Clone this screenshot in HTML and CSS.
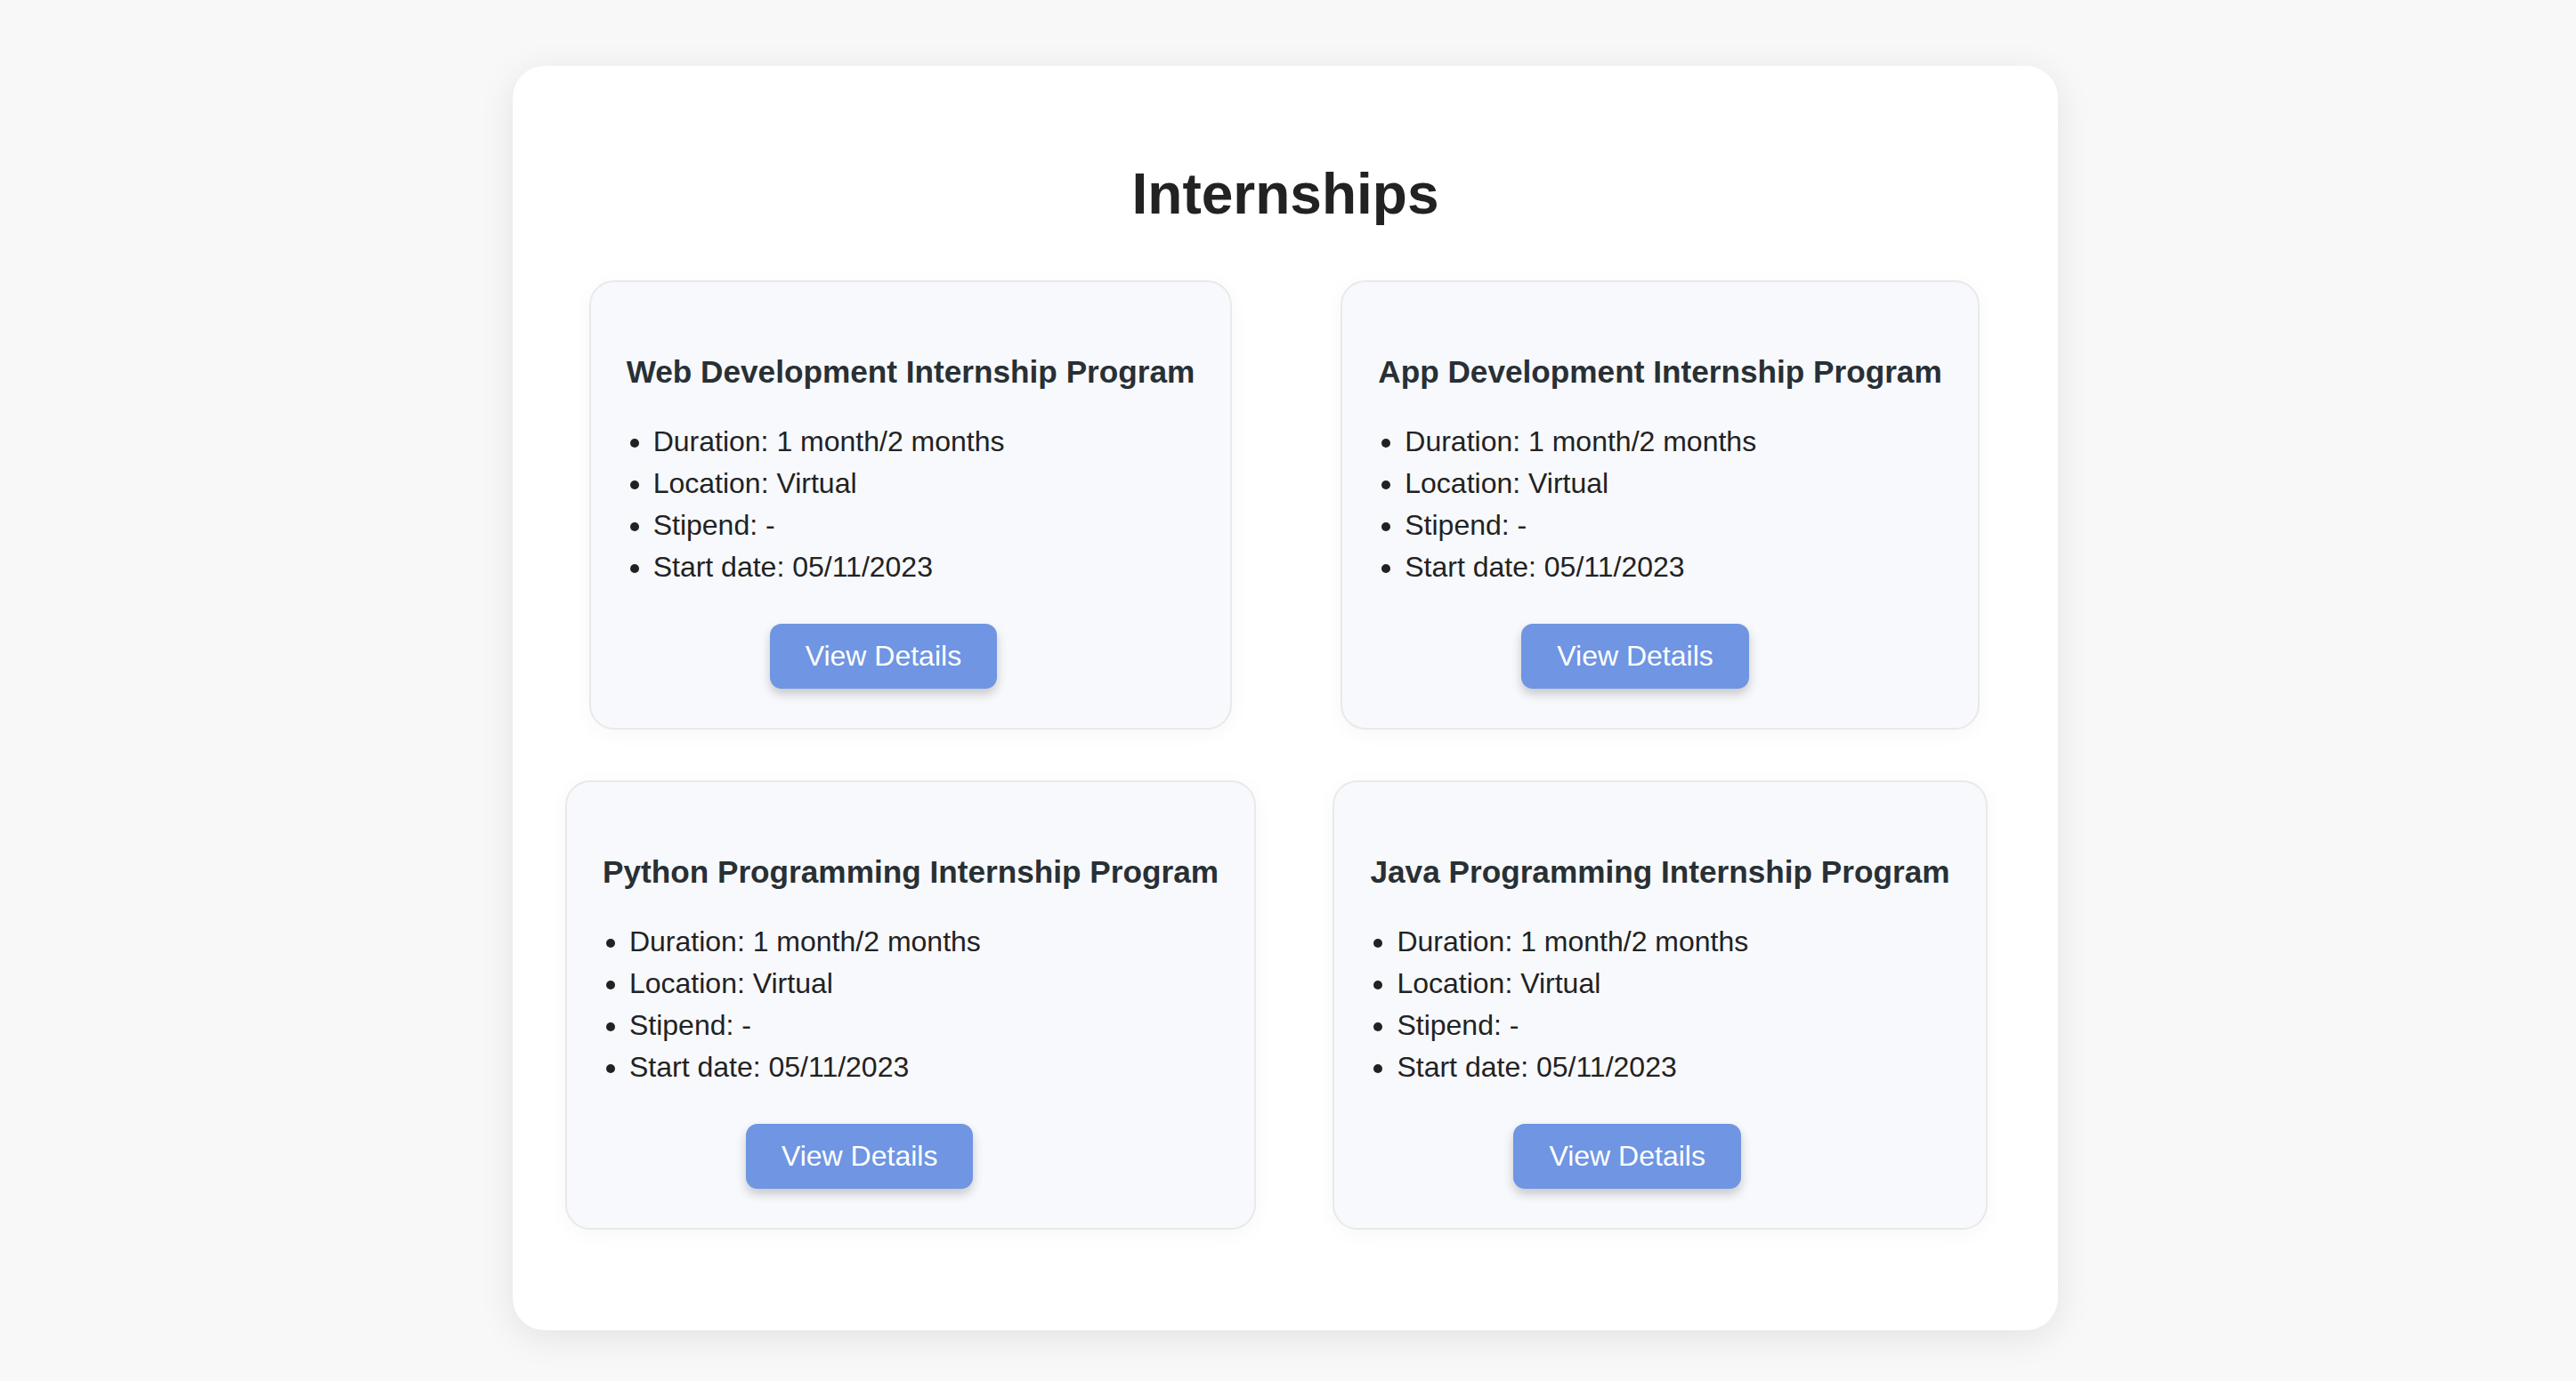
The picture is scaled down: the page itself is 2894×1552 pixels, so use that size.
FILE: index.html
```html
<!DOCTYPE html>
<html lang="en">
<head>
<meta charset="utf-8">
<title>Internships</title>
<link rel="stylesheet" href="styles.css">
</head>
<body>
<main class="panel">
  <h1 class="panel-title">Internships</h1>
  <div class="grid">
    <section class="card">
      <h3 class="card-title">Web Development Internship Program</h3>
      <ul class="card-list">
        <li>Duration: 1 month/2 months</li>
        <li>Location: Virtual</li>
        <li>Stipend: -</li>
        <li>Start date: 05/11/2023</li>
      </ul>
      <button class="btn" type="button">View Details</button>
    </section>
    <section class="card">
      <h3 class="card-title">App Development Internship Program</h3>
      <ul class="card-list">
        <li>Duration: 1 month/2 months</li>
        <li>Location: Virtual</li>
        <li>Stipend: -</li>
        <li>Start date: 05/11/2023</li>
      </ul>
      <button class="btn" type="button">View Details</button>
    </section>
    <section class="card">
      <h3 class="card-title">Python Programming Internship Program</h3>
      <ul class="card-list">
        <li>Duration: 1 month/2 months</li>
        <li>Location: Virtual</li>
        <li>Stipend: -</li>
        <li>Start date: 05/11/2023</li>
      </ul>
      <button class="btn" type="button">View Details</button>
    </section>
    <section class="card">
      <h3 class="card-title">Java Programming Internship Program</h3>
      <ul class="card-list">
        <li>Duration: 1 month/2 months</li>
        <li>Location: Virtual</li>
        <li>Stipend: -</li>
        <li>Start date: 05/11/2023</li>
      </ul>
      <button class="btn" type="button">View Details</button>
    </section>
  </div>
</main>
</body>
</html>
```

FILE: styles.css
```css
* {
  box-sizing: border-box;
}

html, body {
  margin: 0;
  padding: 0;
}

body {
  background: #f8f8f8;
  font-family: "Liberation Sans", Arial, Helvetica, sans-serif;
  color: #222;
  padding: 74px 6px 57px 0;
}

.panel {
  width: 1736px;
  margin: 0 auto;
  background: #ffffff;
  border-radius: 36px;
  box-shadow: 0 8px 40px rgba(0, 0, 0, 0.09);
  padding: 107px 26px 113px;
}

.panel-title {
  margin: 0 0 60px;
  font-size: 64px;
  line-height: 74px;
  font-weight: 700;
  text-align: center;
  color: #222222;
}

.grid {
  display: grid;
  grid-template-columns: 1fr 1fr;
  column-gap: 0;
  row-gap: 57px;
  justify-items: center;
  align-items: start;
}

.card {
  background: #f8f9fc;
  border: 2px solid #e9e9ea;
  border-radius: 28px;
  padding: 40px;
  box-shadow: 0 4px 24px rgba(0, 0, 0, 0.035);
}

.card-title {
  margin: 41px 0 40px;
  font-size: 35.2px;
  line-height: 40px;
  font-weight: 700;
  color: #283035;
  white-space: nowrap;
}

.card-list {
  margin: 0 0 45px;
  padding-left: 30px;
  list-style: disc;
}

.card-list li {
  font-size: 32px;
  line-height: 37px;
  margin-bottom: 10px;
  color: #222222;
}

.card-list li:last-child {
  margin-bottom: 0;
}

.btn {
  display: block;
  margin: 0 0 4px 161px;
  padding: 18px 40px;
  font-family: inherit;
  font-size: 32px;
  line-height: 37px;
  color: #ffffff;
  background: #6f95e3;
  border: none;
  border-radius: 13px;
  box-shadow: 0 6px 12px rgba(0, 0, 0, 0.2);
  cursor: pointer;
}
```
